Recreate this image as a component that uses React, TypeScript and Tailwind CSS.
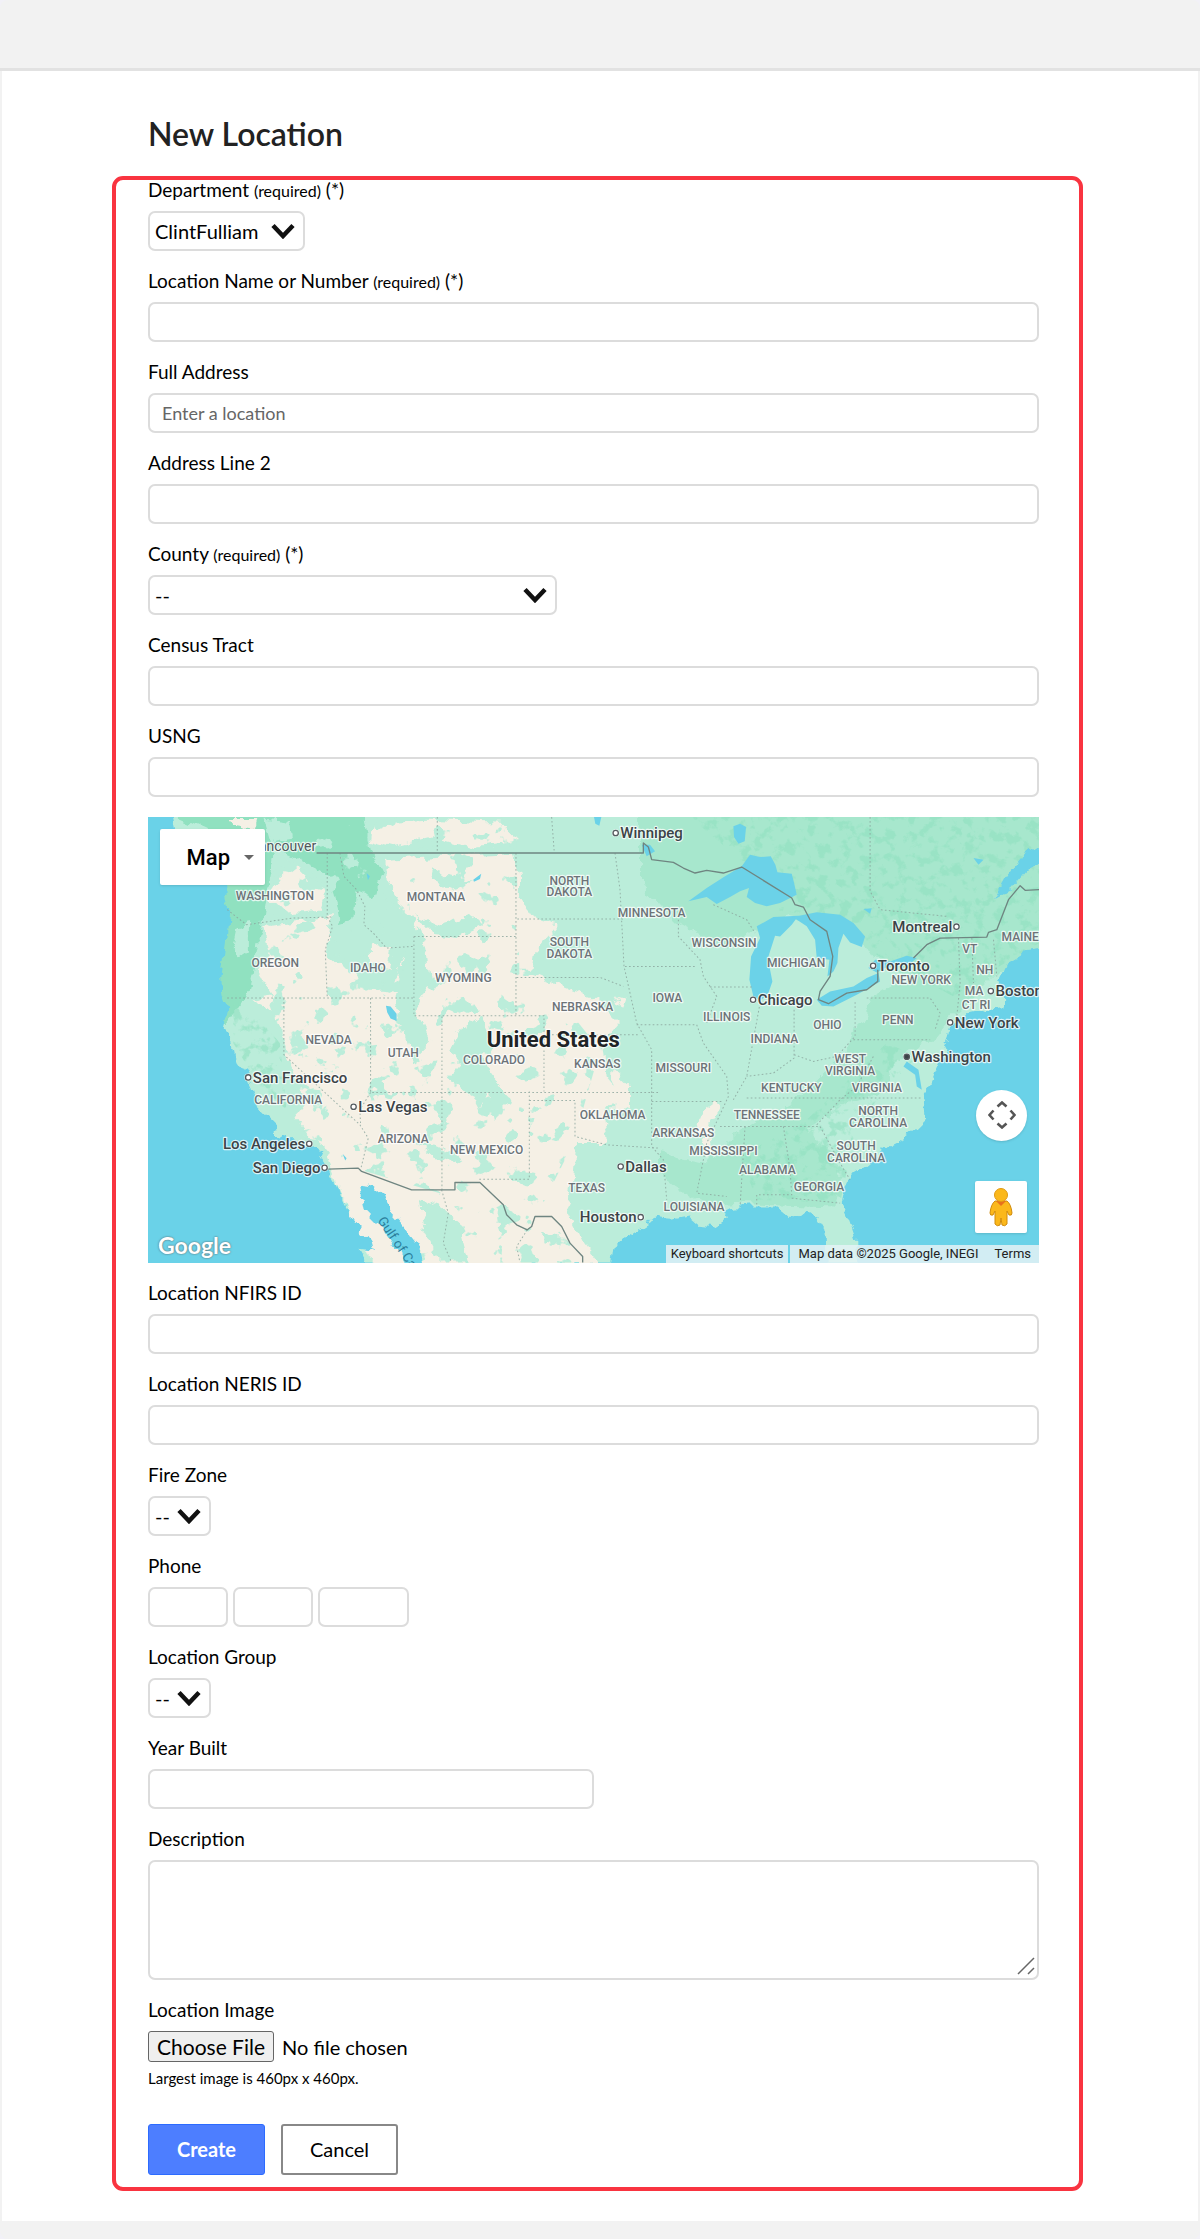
import React from "react";

const controlBase = "h-10 rounded-[7px] border-2 border-[#dcdcdc] bg-white text-black outline-none focus:border-blue-400";

const Field = ({ label, id, required, children }: { label: string; id: string; required?: boolean; children: React.ReactNode }) => (
  <div className="flex flex-col items-start gap-[11px]">
    <label htmlFor={id} className="block h-5 text-[19px] leading-5">
      {label}
      {required && (
        <>
          {" "}
          <span className="text-base leading-none">(required)</span> (*)
        </>
      )}
    </label>
    {children}
  </div>
);

const TextBox = ({ id, className = "w-full", placeholder, label }: { id: string; className?: string; placeholder?: string; label?: string }) => (
  <input
    id={id}
    name={id}
    type="text"
    aria-label={label}
    placeholder={placeholder}
    className={`${controlBase} px-3 text-lg placeholder:text-[#666] ${className}`}
  />
);

const SelectBox = ({ id, option, className }: { id: string; option: string; className: string }) => (
  <div className={`relative ${className}`}>
    <select id={id} name={id} className={`${controlBase} block w-full appearance-none pl-[5px] pr-8 text-xl`}>
      <option>{option}</option>
    </select>
    <svg viewBox="0 0 24 16" className="pointer-events-none absolute right-[10px] top-[12px] w-6 h-4" fill="none" stroke="#111" strokeWidth="4.5">
      <path d="M2 2.5 L12 13 L22 2.5" />
    </svg>
  </div>
);

type MapLabel = [text: string, x: number, y: number];

const states: MapLabel[] = [
  ["WASHINGTON", 405, 272],
  ["MONTANA", 888, 275],
  ["NORTH", 1288, 225],
  ["DAKOTA", 1288, 260],
  ["SOUTH", 1288, 409],
  ["DAKOTA", 1288, 444],
  ["OREGON", 406, 471],
  ["IDAHO", 684, 486],
  ["WYOMING", 970, 516],
  ["NEBRASKA", 1328, 603],
  ["NEVADA", 566, 703],
  ["UTAH", 790, 742],
  ["COLORADO", 1062, 764],
  ["KANSAS", 1372, 776],
  ["CALIFORNIA", 445, 883],
  ["ARIZONA", 790, 1001],
  ["NEW MEXICO", 1040, 1032],
  ["OKLAHOMA", 1418, 928],
  ["TEXAS", 1340, 1147],
  ["MINNESOTA", 1535, 321],
  ["WISCONSIN", 1752, 412],
  ["MICHIGAN", 1968, 471],
  ["IOWA", 1582, 577],
  ["ILLINOIS", 1760, 634],
  ["INDIANA", 1903, 700],
  ["OHIO", 2062, 657],
  ["PENN", 2273, 642],
  ["NEW YORK", 2343, 523],
  ["VT", 2489, 431],
  ["NH", 2534, 492],
  ["MAINE", 2640, 393],
  ["MA", 2502, 555],
  ["CT RI", 2508, 599],
  ["MISSOURI", 1630, 787],
  ["KENTUCKY", 1954, 848],
  ["WEST", 2130, 760],
  ["VIRGINIA", 2130, 795],
  ["VIRGINIA", 2210, 848],
  ["TENNESSEE", 1880, 928],
  ["NORTH", 2214, 917],
  ["CAROLINA", 2214, 953],
  ["SOUTH", 2148, 1021],
  ["CAROLINA", 2148, 1056],
  ["ARKANSAS", 1630, 982],
  ["MISSISSIPPI", 1750, 1036],
  ["ALABAMA", 1882, 1094],
  ["GEORGIA", 2037, 1143],
  ["LOUISIANA", 1662, 1204],
];

// Label anchored at its marker; "end" puts the name on the left of the dot.
const cities: { name: string; x: number; y: number; end?: boolean; capital?: boolean }[] = [
  { name: "Winnipeg", x: 1427, y: 70 },
  { name: "San Francisco", x: 325, y: 803 },
  { name: "Las Vegas", x: 641, y: 891 },
  { name: "Los Angeles", x: 508, y: 1002, end: true },
  { name: "San Diego", x: 554, y: 1074, end: true },
  { name: "Montreal", x: 2449, y: 351, end: true },
  { name: "Toronto", x: 2199, y: 468 },
  { name: "Chicago", x: 1839, y: 570 },
  { name: "Boston", x: 2552, y: 544 },
  { name: "New York", x: 2430, y: 638 },
  { name: "Washington", x: 2300, y: 741, capital: true },
  { name: "Dallas", x: 1442, y: 1070 },
  { name: "Houston", x: 1502, y: 1222, end: true },
];

const MapDrawing = () => (
  <svg viewBox="24 22 2673 1336" preserveAspectRatio="xMidYMid slice" className="absolute inset-0 w-full h-full" role="img" aria-label="Map of the United States">
    <defs>
      <filter id="rough" x="-5%" y="-5%" width="110%" height="110%">
        <feTurbulence type="fractalNoise" baseFrequency="0.025" numOctaves="3" seed="4" />
        <feDisplacementMap in="SourceGraphic" scale="40" xChannelSelector="R" yChannelSelector="G" />
      </filter>
      <filter id="patchesPlain" x="0" y="0" width="100%" height="100%" colorInterpolationFilters="sRGB">
        <feTurbulence type="fractalNoise" baseFrequency="0.016" numOctaves="4" seed="11" />
        <feColorMatrix values="0 0 0 0 0.733  0 0 0 0 0.929  0 0 0 0 0.855  26 0 0 0 -16.2" />
        <feComposite operator="in" in2="SourceGraphic" />
      </filter>
      <filter id="patchesForest" x="0" y="0" width="100%" height="100%" colorInterpolationFilters="sRGB">
        <feTurbulence type="fractalNoise" baseFrequency="0.03" numOctaves="4" seed="7" />
        <feColorMatrix values="0 0 0 0 0.565  0 0 0 0 0.882  0 0 0 0 0.753  7 0 0 0 -3.6" />
        <feComposite operator="in" in2="SourceGraphic" />
      </filter>
    </defs>

    <rect x="24" y="22" width="2673" height="1336" fill="#bbedda" />

    {/* eastern and Canadian woodland */}
    <g filter="url(#rough)">
      <path fill="#a7e7cd" d="M1500 0 H2720 V420 L2560 500 L2420 640 L2380 690 L2280 740 L2240 840 L2120 880 L2000 960 L2100 1060 L2080 1190 L1820 1180 L1700 1190 L1560 1100 L1560 1030 L1700 1060 L1800 960 L1980 860 L2120 720 L2200 560 L2300 500 L2200 440 L2150 360 L1950 320 L1850 360 L1760 420 L1600 330 L1500 220Z" />
      <path fill="#90e1c0" d="M85 10 H670 L690 120 L730 200 L700 260 L650 240 L640 330 L600 340 L575 200 L520 170 L400 110 L370 330 L340 480 L320 560 L260 640 L235 640 V240 L200 60Z" />
      <path fill="#bbedda" d="M290 350 L330 340 L330 420 L300 440 L280 400Z M400 120 L460 160 L540 200 L430 230 L380 220Z M380 30 L450 40 L460 90 L400 100Z" />
    </g>
    <g filter="url(#patchesForest)" opacity="0.6">
      <path d="M1650 22 H2697 V400 L2560 480 L2440 560 L2200 430 L2150 340 L1900 300 L1950 200 L1800 150Z" />
      <path d="M2240 700 L2330 740 L2150 940 L2100 1180 L1850 1170 L1800 1040 L2000 930Z" />
      <path d="M280 540 L420 700 L440 900 L360 830 L280 700Z" />
    </g>

    {/* dry lands */}
    <g filter="url(#rough)" fill="#f5f0e5">
      <path d="M740 150 L1120 130 L1140 200 L1140 480 L1240 520 L1370 570 L1440 640 L1390 700 L1400 800 L1440 850 L1390 920 L1400 1000 L1310 1000 L1300 1100 L1280 1190 L1330 1290 L1380 1358 L700 1380 L640 1240 L590 1110 L560 1030 L500 970 L470 920 L500 880 L460 800 L440 730 L410 620 L340 570 L400 560 L350 480 L390 440 L370 350 L570 320 L560 440 L620 470 L680 540 L760 540 L790 440 L850 380 L790 290 L740 210Z" />
      <path d="M700 40 L860 30 L1100 40 L1130 100 L1000 115 L880 80 L760 110 L690 90Z" />
      <path d="M420 200 L470 160 L500 220 L560 240 L540 300 L430 310 L380 260Z" />
      <path d="M1690 900 L1730 870 L1740 900 L1700 960 L1720 1040 L1700 1050 L1670 950Z M1430 560 L1460 570 L1450 600Z M260 25 L350 25 L340 60 L280 50Z M1420 780 L1470 830 L1470 900 L1420 930Z M1130 250 L1180 330 L1250 350 L1190 420 L1180 480 L1130 480Z M690 400 L760 420 L750 480 L690 460Z" />
    </g>
    <path
      filter="url(#patchesPlain)"
      d="M690 22 H1130 V150 L1140 560 L1300 620 L1380 720 L1300 1000 L1200 1200 L1340 1358 H820 L900 1150 L660 1080 L480 960 L440 740 L380 560 V150Z"
    />
    <g filter="url(#rough)" fill="#bbedda">
      <path d="M800 400 L840 350 L860 430 L870 520 L820 590 L850 640 L880 700 L820 760 L790 660 L770 560Z M930 720 L960 660 L1020 620 L1050 680 L1020 740 L1080 820 L1110 880 L1060 930 L1040 850 L1020 900 L1000 860 L920 800 L960 760Z M830 1000 L900 1010 L970 1050 L960 1070 L880 1040Z M840 1170 L900 1190 L960 1240 L990 1358 H900 L850 1260Z" />
      <path d="M410 960 L540 990 L560 1040 L600 1150 L620 1190 L570 1120 L480 1010Z M820 320 L900 350 L1000 320 L1030 350 L960 380 L880 370Z M880 170 L920 200 L1000 220 L940 240 L870 210Z M1210 1260 L1250 1270 L1250 1310 L1210 1300Z" />
    </g>

    {/* oceans, gulfs and lakes */}
    <g filter="url(#rough)" fill="#6bd2e8">
      <path d="M0 0 H88 L100 60 L210 75 L245 150 L255 235 L268 300 L262 370 L250 460 L244 500 L248 560 L262 600 L248 655 L273 690 L283 740 L310 780 L335 830 L355 890 L405 940 L415 980 L470 1000 L530 1020 L566 1080 L596 1130 L616 1190 L646 1240 L686 1290 L696 1325 L656 1320 L696 1390 H0Z" />
      <path d="M660 1125 L705 1130 L735 1155 L750 1205 L795 1255 L835 1305 L860 1390 H810 L765 1310 L715 1240 L675 1200Z" />
      <path d="M2740 420 L2655 430 L2605 460 L2580 510 L2595 560 L2590 590 L2530 605 L2460 620 L2435 650 L2425 700 L2395 760 L2365 830 L2345 855 L2355 930 L2325 960 L2270 1000 L2240 1015 L2180 1065 L2130 1095 L2115 1130 L2105 1180 L2125 1230 L2145 1290 L2150 1400 H2740Z" />
      <path d="M1410 1400 L1420 1310 L1460 1280 L1520 1240 L1550 1225 L1600 1230 L1650 1220 L1680 1245 L1730 1250 L1770 1225 L1750 1205 L1770 1195 L1830 1190 L1910 1190 L1950 1225 L2000 1205 L2030 1225 L2050 1260 L2055 1400Z" />
      <path d="M2700 105 L2650 140 L2600 200 L2562 268 L2610 242 L2660 182 L2710 150Z" />
    </g>
    <g fill="#6bd2e8">
      <path d="M1645 275 L1700 235 L1755 200 L1805 170 L1830 135 L1860 142 L1892 140 L1906 165 L1912 188 L1955 192 L1962 220 L1970 255 L1920 280 L1880 290 L1845 280 L1820 262 L1827 235 L1800 245 L1770 262 L1730 283 L1700 262Z" />
      <path d="M1850 350 L1900 322 L1975 318 L1955 345 L1920 380 L1905 378 L1885 440 L1890 480 L1897 515 L1885 550 L1862 572 L1840 560 L1828 510 L1833 440 L1860 385Z" />
      <path d="M1958 322 L2030 308 L2100 315 L2140 340 L2175 380 L2165 412 L2130 398 L2110 372 L2095 415 L2092 460 L2080 485 L2062 500 L2068 450 L2030 445 L2025 390 L2000 350Z" />
      <path d="M2030 570 L2070 545 L2140 530 L2180 505 L2215 490 L2220 515 L2150 555 L2080 590 L2045 588Z" />
      <path d="M2185 475 L2205 450 L2250 455 L2300 438 L2330 445 L2310 462 L2240 472 L2210 488Z" />
      <path d="M1780 50 L1800 42 L1818 52 L1814 95 L1795 102 L1782 82Z M738 588 L752 590 L770 612 L770 634 L752 626 L742 608Z M1000 210 L1024 192 L1020 208 L1002 216Z M1362 22 H1384 L1378 48 L1366 42Z M608 1032 L620 1045 L616 1052Z M1505 105 L1530 105 L1545 125 L1520 140Z M680 190 L690 200 L684 212Z" />
      <path d="M2300 755 L2335 780 L2345 840 L2330 830 L2325 795 L2290 770Z M2170 298 L2195 296 L2190 312Z M2500 145 L2530 150 L2515 165Z" />
    </g>

    {/* state lines */}
    <g fill="none" stroke="#8aa49c" strokeWidth="3" strokeDasharray="5 7" opacity="0.8">
      <path d="M562 130 V320 L578 350 L556 420 L562 562 M262 300 L320 345 L460 325 L576 322 M262 565 H822 M432 565 V735 L660 945 L685 985 L662 1080 M692 565 V848 H1560 M692 848 L660 900 L662 945 M600 130 L612 200 L650 240 L675 290 L672 345 L700 370 L740 415 L820 410" />
      <path d="M1128 130 V615 M822 380 H1128 M822 380 V618 H1212 V845 M906 620 V1140 M1132 328 H1450 M1130 503 H1380 L1450 530 M1168 845 V1108 H1018 M1168 872 H1305 V980 L1400 1005 L1560 1015 M1212 675 H1500" />
      <path d="M1425 130 L1440 240 L1452 470 L1470 550 L1490 640 L1535 720 V1010 L1570 1050 L1580 1170 M1455 470 H1670 M1490 645 H1670 L1690 700 L1760 800 L1765 860 L1700 1000 L1670 1150 L1760 1160 M1535 875 H1750 M1615 330 V380 L1680 450 L1690 500 L1730 560 L1700 640 M1720 285 L1820 330 L1845 370 M1710 532 H1840" />
      <path d="M1860 580 L1838 700 L1820 800 L1780 870 M1962 600 V745 L1900 790 L1820 800 M1962 735 L2020 755 L2090 740 L2145 680 V570 M1820 865 H2345 M1740 950 H2040 L2100 1060 L2130 1110 M1815 950 L1800 1190 M1930 950 L1950 1080 L1955 1155 H1850 V1185 M1955 1165 L2100 1180 M2030 945 L2100 870 L2150 830 L2200 740 M2140 690 H2370 M2180 565 H2370 L2400 610 L2385 660 M2190 22 V245 L2220 300 L2420 320 M2455 385 L2460 520 L2450 620 M2495 385 L2500 520 M2560 390 L2570 500 M892 22 V130 M1235 22 L1243 130 M905 1140 L925 1210 L910 1300 L935 1358 M1162 1260 L1130 1310 L1140 1358" />
    </g>
    <g fill="none" stroke="#6f8581" strokeWidth="4" strokeLinejoin="round">
      <path d="M530 130 H1510 V100 L1525 112 L1535 150 L1600 158 L1630 175 L1665 190 L1700 182 L1750 190 L1805 172 L1955 265 L1965 285 L1990 292 L2010 330 L2060 365 L2078 440 L2070 500 L2040 545 L2035 570 L2065 582 L2120 550 L2180 540 L2213 515 L2213 480 M2320 445 L2360 405 L2400 385 L2540 382 L2545 368 L2570 360 L2605 270 L2640 228 L2655 242 L2697 240" />
      <path d="M565 1078 L655 1075 L665 1085 L815 1140 H945 V1118 H1020 L1090 1185 L1100 1215 L1130 1245 L1162 1260 L1175 1250 L1185 1220 L1235 1220 L1265 1250 L1290 1300 L1328 1340 V1358" />
    </g>

    <g className="font-['Roboto',sans-serif]" textAnchor="middle" stroke="#ffffff" strokeOpacity="0.75" strokeWidth="7" strokeLinejoin="round" paintOrder="stroke">
      <g fontSize="36" fill="#6c7378" fontWeight="500">
        {states.map(([text, x, y]) => (
          <text key={`${text}-${x}`} x={x} y={y}>
            {text}
          </text>
        ))}
      </g>
      <text x="430" y="124" fontSize="42" fill="#50575b">Vancouver</text>
      <g fontSize="45" fill="#3c4347" fontWeight="500">
        {cities.map(({ name, x, y, end, capital }) => (
          <g key={name}>
            <circle cx={x} cy={y} r="8" fill={capital ? "#3c4347" : "#fff"} />
            <circle cx={x} cy={y} r="8" fill="none" stroke="#555c60" strokeWidth="4" strokeOpacity="1" />
            <text x={end ? x - 12 : x + 14} y={y + 16} textAnchor={end ? "end" : "start"}>
              {name}
            </text>
          </g>
        ))}
      </g>
      <text x="1240" y="712" fontSize="66" fill="#1f2426" fontWeight="700">
        United States
      </text>
    </g>
    <text x="712" y="1232" fontSize="40" fill="#2c7f9c" transform="rotate(56 712 1232)" className="font-['Roboto',sans-serif]">
      Gulf of California
    </text>
  </svg>
);

const Pegman = () => (
  <svg viewBox="0 0 24 40" className="w-6 h-10">
    <path d="M6 14 Q2 17 1 26 Q1 29 4 28 L6 24 V37 Q8 40 11 38 L12 31 L13 38 Q16 40 18 37 V24 L20 28 Q23 29 23 26 Q22 17 18 14Z" fill="#fbb81b" stroke="#d08c0d" />
    <path d="M7 14 L12 19 L17 14Z" fill="#e8711c" />
    <circle cx="12" cy="8" r="6.5" fill="#fbb81b" stroke="#e09a12" />
  </svg>
);

const LocationMap = () => (
  <div className="relative w-full aspect-[2/1] overflow-hidden bg-[#6bd2e8] font-['Roboto',sans-serif]">
    <MapDrawing />
    <button type="button" className="absolute left-3 top-3 flex h-14 w-[105px] items-center justify-end gap-[14px] rounded-xs bg-white pr-[11px] text-[22px] font-medium text-black shadow">
      Map
      <svg viewBox="0 0 10 5" className="w-[10px] h-[5px] fill-[#666]">
        <path d="M0 0 H10 L5 5Z" />
      </svg>
    </button>
    <span className="absolute bottom-[2px] left-[10px] font-['Lato',sans-serif] text-[23px] font-bold leading-8 text-white [text-shadow:0_0_2px_#555]">Google</span>
    <button type="button" aria-label="Map camera controls" className="absolute bottom-[122px] right-3 flex size-[51px] items-center justify-center rounded-full bg-white shadow">
      <svg viewBox="0 0 28 28" className="w-7 h-7" fill="none" stroke="#555" strokeWidth="2.6">
        <path d="M9.5 5.5 L14 1.5 L18.5 5.5 M9.5 22.5 L14 26.5 L18.5 22.5 M5.5 9.5 L1.5 14 L5.5 18.5 M22.5 9.5 L26.5 14 L22.5 18.5" />
      </svg>
    </button>
    <button type="button" aria-label="Street View" className="absolute bottom-[30px] right-3 flex size-[52px] items-center justify-center rounded-xs bg-white shadow">
      <Pegman />
    </button>
    <div className="absolute bottom-0 right-0 flex h-[18px] gap-[2px] text-[13px] leading-[18px] text-[#222]">
      <button type="button" className="bg-[#e4f2f5]/85 px-[5px]">Keyboard shortcuts</button>
      <div className="flex gap-4 bg-[#e4f2f5]/85 px-2">
        <span>Map data ©2025 Google, INEGI</span>
        <a href="#terms">Terms</a>
      </div>
    </div>
  </div>
);

const App = () => {
  return (
    <div className="min-h-screen bg-[#f2f1f7] font-['Lato',sans-serif] text-black">
      <div className="overflow-hidden rounded-lg bg-[#f2f2f2] pb-[18px]">
        <header className="h-[71px] border-b-[3px] border-[#e2e2e2]" />
        <main className="mx-[2px] bg-white pb-[30px] pl-[110px] pr-[115px] pt-[43px]">
          <h1 className="mb-[22px] pl-9 text-[32px] leading-10 font-semibold text-[#222]">New Location</h1>

          <form className="flex flex-col gap-5 rounded-[11px] border-4 border-[#f93440] pb-3 pl-8 pr-10" onSubmit={(e) => e.preventDefault()}>
            <Field label="Department" id="department" required>
              <SelectBox id="department" option="ClintFulliam" className="w-[157px]" />
            </Field>
            <Field label="Location Name or Number" id="name" required>
              <TextBox id="name" />
            </Field>
            <Field label="Full Address" id="address">
              <TextBox id="address" placeholder="Enter a location" />
            </Field>
            <Field label="Address Line 2" id="address2">
              <TextBox id="address2" />
            </Field>
            <Field label="County" id="county" required>
              <SelectBox id="county" option="--" className="w-[409px]" />
            </Field>
            <Field label="Census Tract" id="census">
              <TextBox id="census" />
            </Field>
            <Field label="USNG" id="usng">
              <TextBox id="usng" />
            </Field>

            <LocationMap />

            <Field label="Location NFIRS ID" id="nfirs">
              <TextBox id="nfirs" />
            </Field>
            <Field label="Location NERIS ID" id="neris">
              <TextBox id="neris" />
            </Field>
            <Field label="Fire Zone" id="zone">
              <SelectBox id="zone" option="--" className="w-[63px]" />
            </Field>
            <Field label="Phone" id="phone1">
              <div className="flex gap-[5px]">
                <TextBox id="phone1" className="w-20" />
                <TextBox id="phone2" className="w-20" label="Phone prefix" />
                <TextBox id="phone3" className="w-[91px]" label="Phone line number" />
              </div>
            </Field>
            <Field label="Location Group" id="group">
              <SelectBox id="group" option="--" className="w-[63px]" />
            </Field>
            <Field label="Year Built" id="year">
              <TextBox id="year" className="w-1/2" />
            </Field>
            <Field label="Description" id="description">
              <div className="relative flex w-full">
                <textarea id="description" className="h-[120px] w-full resize-none rounded-[7px] border-2 border-[#dcdcdc] px-3 py-2 text-lg outline-none" />
                <svg viewBox="0 0 18 18" className="pointer-events-none absolute bottom-[5px] right-1 h-[18px] w-[18px]" stroke="#666" strokeWidth="1.5">
                  <path d="M1 17 L17 1 M11 17 L17 11" />
                </svg>
              </div>
            </Field>
            <Field label="Location Image" id="image">
              <div className="flex w-full flex-col gap-[6px]">
                <input
                  id="image"
                  type="file"
                  className="h-[31px] w-full text-xl leading-[29px] file:mr-2 file:h-[31px] file:rounded-[3px] file:border file:border-solid file:border-[#666] file:bg-[#efefef] file:px-2 file:text-[21px] file:leading-[27px] file:text-black"
                />
                <p className="text-[15px] leading-5">Largest image is 460px x 460px.</p>
              </div>
            </Field>

            <div className="mt-4 flex gap-4 text-xl">
              <button type="submit" className="h-[51px] w-[117px] rounded-[3px] border border-[#2c6bff] bg-[#4d7eff] font-bold text-white">Create</button>
              <button type="button" className="h-[51px] w-[117px] rounded-[3px] border-2 border-[#888] bg-white">Cancel</button>
            </div>
          </form>
        </main>
      </div>
    </div>
  );
};

export default App;
